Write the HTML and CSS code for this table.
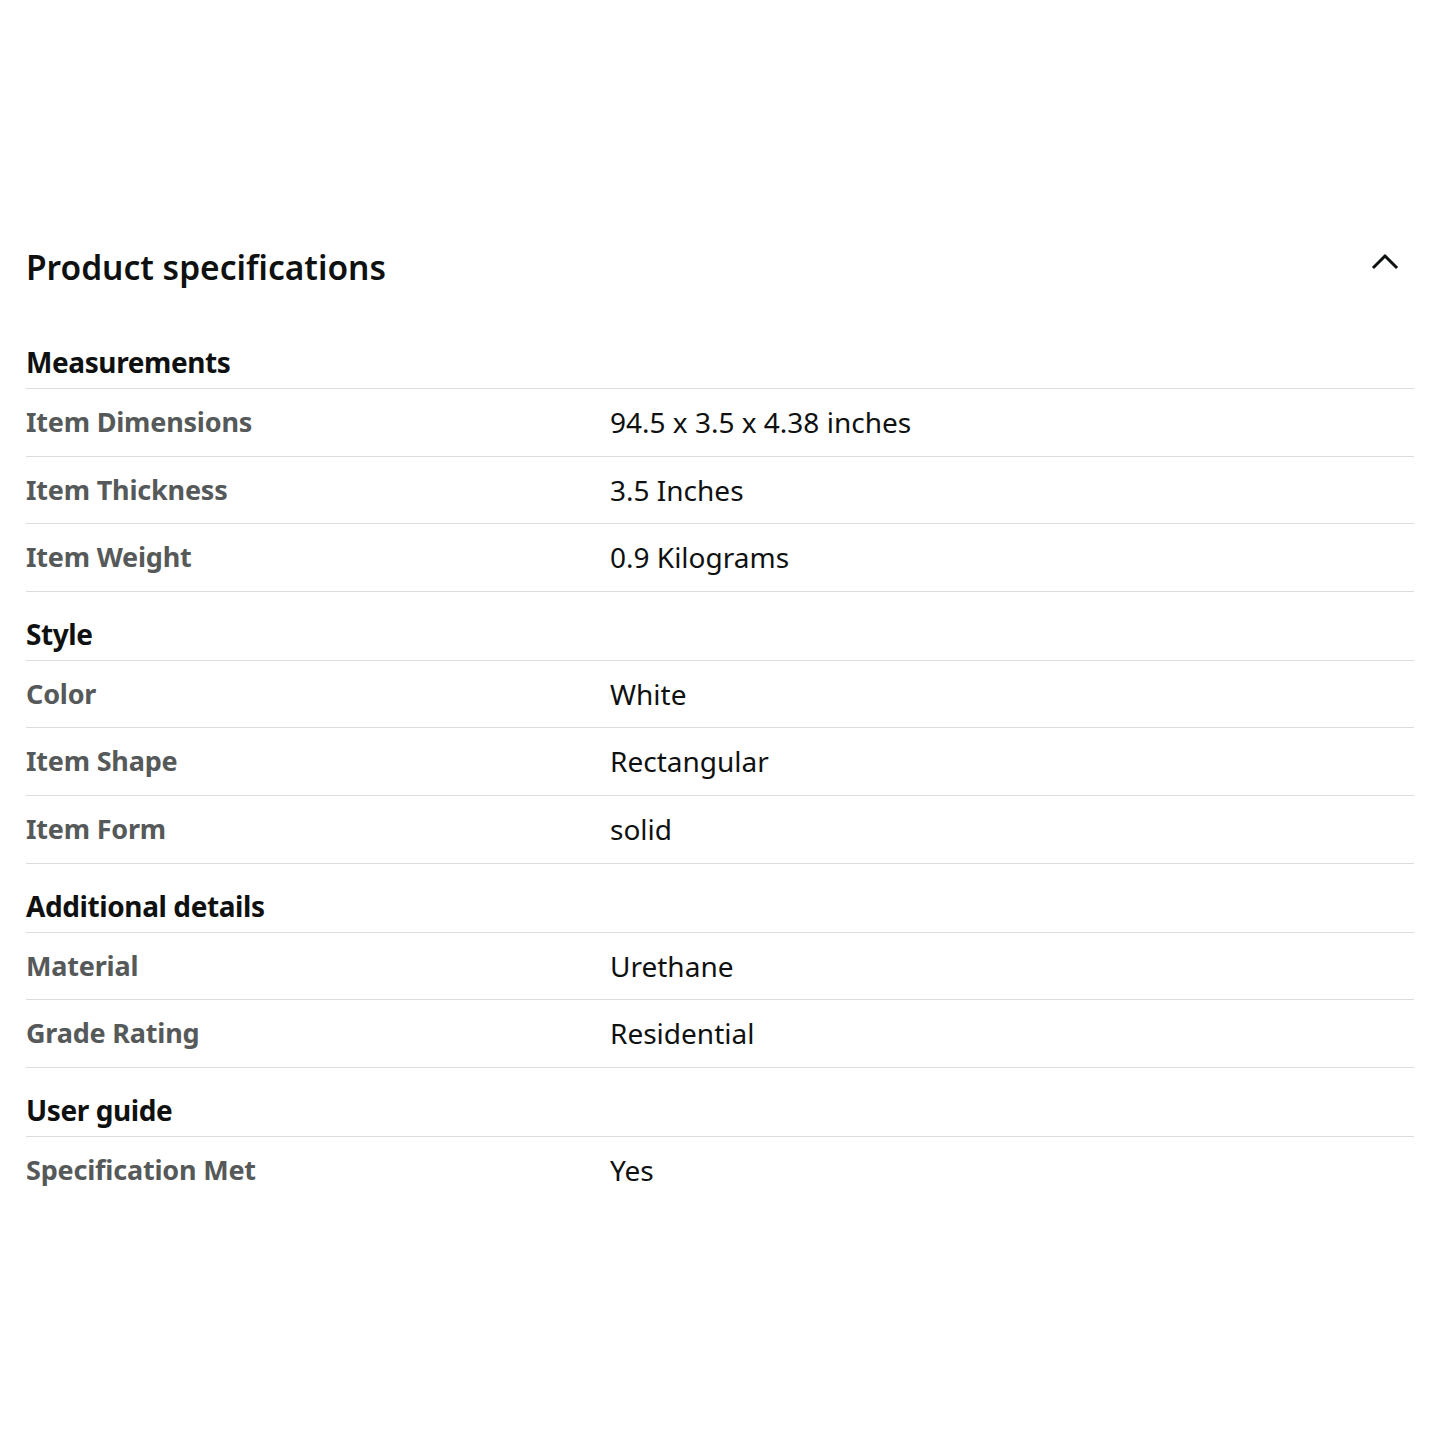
FILE: index.html
```html
<!DOCTYPE html>
<html lang="en">
<head>
  <meta charset="UTF-8">
  <meta name="viewport" content="width=device-width, initial-scale=1.0">
  <title>Product specifications</title>
  <link rel="stylesheet" href="styles.css">
</head>

<body>
  <div class="container">
    <div class="spec-header">
      <h1>Product specifications</h1>
      <button class="toggle" aria-label="Collapse">
        <svg width="28" height="28" viewBox="0 0 28 28" fill="none" stroke="#0f1111" stroke-width="3" stroke-linecap="square">
          <polyline points="3,20 14,9 25,20"></polyline>
        </svg>
      </button>
    </div>

    <div class="section">
      <div class="section-title">Measurements</div>
      <div class="row"><span class="label">Item Dimensions</span><span class="value">94.5 x 3.5 x 4.38 inches</span></div>
      <div class="row"><span class="label">Item Thickness</span><span class="value">3.5 Inches</span></div>
      <div class="row"><span class="label">Item Weight</span><span class="value">0.9 Kilograms</span></div>
    </div>

    <div class="section">
      <div class="section-title">Style</div>
      <div class="row"><span class="label">Color</span><span class="value">White</span></div>
      <div class="row"><span class="label">Item Shape</span><span class="value">Rectangular</span></div>
      <div class="row"><span class="label">Item Form</span><span class="value">solid</span></div>
    </div>

    <div class="section">
      <div class="section-title">Additional details</div>
      <div class="row"><span class="label">Material</span><span class="value">Urethane</span></div>
      <div class="row"><span class="label">Grade Rating</span><span class="value">Residential</span></div>
    </div>

    <div class="section">
      <div class="section-title">User guide</div>
      <div class="row"><span class="label">Specification Met</span><span class="value">Yes</span></div>
    </div>
  </div>
</body>
</html>
```

FILE: styles.css
```css
:root {
  --ink: #0f1111;
  --muted: #565959;
  --rule: #dddddd;
}

* {
  box-sizing: border-box;
  margin: 0;
  padding: 0;
}

body {
  font-family: "Noto Sans", Roboto, Arial, sans-serif;
  background: #ffffff;
  color: var(--ink);
}

.container {
  padding: 236px 26px 0;
}

.spec-header {
  display: flex;
  justify-content: space-between;
  align-items: center;
  height: 62px;
  margin-bottom: 22px;
}

h1 {
  font-size: 33.5px;
  font-weight: 600;
  line-height: 40px;
}

.toggle {
  background: none;
  border: none;
  margin-right: 15px;
  margin-top: -12px;
  display: flex;
  cursor: pointer;
}

.section + .section {
  border-top: 1px solid var(--rule);
}

.section-title {
  font-size: 28px;
  font-weight: 700;
  line-height: 34px;
  letter-spacing: -0.4px;
  padding: 25px 0 9px;
}

.row {
  display: grid;
  grid-template-columns: 584px 1fr;
  border-top: 1px solid var(--rule);
  padding: 16px 0;
  font-size: 28px;
  line-height: 34.6px;
}

.label {
  font-size: 27px;
  font-weight: 700;
  letter-spacing: -0.2px;
  color: var(--muted);
}

.value {
  color: var(--ink);
}
```
